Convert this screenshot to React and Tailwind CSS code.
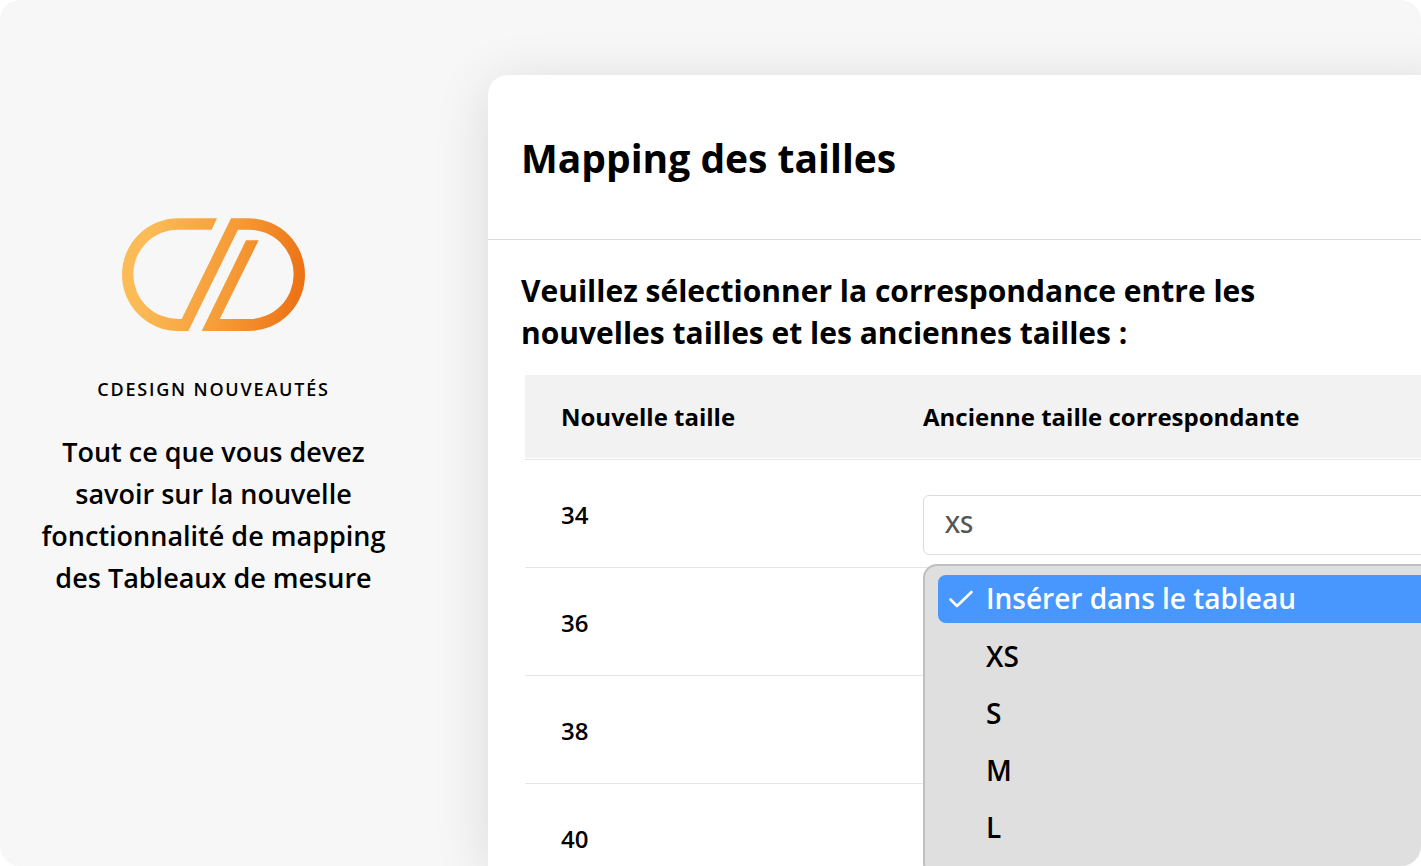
import React, { useState } from 'react';

const newSizes = ['34', '36', '38', '40'];
const oldSizes = ['XS', 'S', 'M', 'L'];

const Logo = () => (
  <svg viewBox="39 39 549 339" className="w-[183px] h-[113px]" role="img" aria-label="CDesign">
    <defs>
      <linearGradient id="logo-gradient" x1="0" y1="0.45" x2="1" y2="0.55">
        <stop offset="0.1" stopColor="#fbbc58" />
        <stop offset="0.6" stopColor="#f59a36" />
        <stop offset="1" stopColor="#ec7114" />
      </linearGradient>
    </defs>
    <path
      fill="url(#logo-gradient)"
      d="M324 40H208A169 169 0 0 0 208 378H238L387 74H420A134 134 0 0 1 420 342H332L449 106H411L278 378H419A169 169 0 0 0 419 40H366L218 342H207A134 134 0 0 1 207 74H308Z"
    />
  </svg>
);

const Intro = () => (
  <aside className="w-[427px] shrink-0 flex flex-col items-center pt-[218px] text-center">
    <Logo />
    <p className="mt-[46px] text-[18px] leading-6 font-semibold tracking-widest">CDESIGN NOUVEAUTÉS</p>
    <h1 className="mt-[30px] px-8 text-[27px] leading-[42px] font-semibold">
      Tout ce que vous devez
      <br />
      savoir sur la nouvelle
      <br />
      fonctionnalité de mapping
      <br />
      des Tableaux de mesure
    </h1>
  </aside>
);

const Check = () => (
  <svg viewBox="0 0 24 18" className="w-6 h-[18px]" fill="none" stroke="currentColor" strokeWidth="2.6" strokeLinecap="round" strokeLinejoin="round">
    <path d="M1.5 9.5L8 16L22.5 2" />
  </svg>
);

const SizeMenu = ({ onPick }) => (
  <div
    role="listbox"
    aria-label="Ancienne taille"
    className="absolute z-10 top-full mt-[9px] left-0 w-full flex flex-col gap-[10px] px-[13px] pt-[9px] pb-6 text-[28px] font-semibold bg-[#dfdfdf] border-2 border-[#bfbfbf] rounded-[14px]"
  >
    <button
      role="option"
      aria-selected={true}
      onClick={() => onPick('XS')}
      className="h-12 shrink-0 flex items-center gap-[13px] px-[11px] rounded-lg bg-[#4797ff] text-white text-left"
    >
      <Check />
      <span className="pb-[2px]">Insérer dans le tableau</span>
    </button>
    {oldSizes.map((size) => (
      <button
        key={size}
        role="option"
        aria-selected={false}
        onClick={() => onPick(size)}
        className="h-[47px] shrink-0 pl-12 pb-[2px] text-left"
      >
        {size}
      </button>
    ))}
  </div>
);

const MappingTable = () => {
  const [value, setValue] = useState('XS');
  return (
    <table className="w-full table-fixed border-separate border-spacing-0 text-[24px] text-left">
      <thead>
        <tr>
          <th className="w-[398px] p-0 border-b border-[#e5e5e5] font-bold">
            <div className="h-[83px] mb-px pl-9 flex items-center bg-[#f2f2f2]">Nouvelle taille</div>
          </th>
          <th className="p-0 border-b border-[#e5e5e5] font-bold">
            <div className="h-[83px] mb-px flex items-center bg-[#f2f2f2]">Ancienne taille correspondante</div>
          </th>
        </tr>
      </thead>
      <tbody>
        {newSizes.map((size, i) => (
          <tr key={size} className="h-[108px]">
            <td className="p-0 pt-[2px] pl-9 border-b border-[#e5e5e5] font-semibold">{size}</td>
            <td className="p-0 border-b border-[#e5e5e5] align-top">
              {i === 0 && (
                <div className="relative mt-[35px]">
                  <select
                    aria-label={`Ancienne taille pour ${size}`}
                    value={value}
                    onChange={(e) => setValue(e.target.value)}
                    className="block w-full h-[60px] pl-[21px] pb-[2px] appearance-none bg-white border border-[#dcdcdc] rounded-md font-semibold text-[#555]"
                  >
                    {oldSizes.map((s) => (
                      <option key={s}>{s}</option>
                    ))}
                  </select>
                  <SizeMenu onPick={setValue} />
                </div>
              )}
            </td>
          </tr>
        ))}
      </tbody>
    </table>
  );
};

const App = () => (
  <div className="h-screen bg-white">
    <div className="h-full flex overflow-hidden rounded-[20px] bg-[#f7f7f7] text-black font-['Open_Sans',sans-serif]">
      <Intro />
      {/* The card runs off the right and bottom edges */}
      <main className="flex-1 min-w-0 mt-[75px] ml-[61px] -mr-10 bg-white rounded-tl-[20px] shadow-[0_8px_56px_rgba(0,0,0,0.12)]">
        <header className="h-[165px] flex items-center pt-[2px] pl-[33px] border-b border-[#dcdcdc]">
          <h2 className="text-[39px] font-bold">Mapping des tailles</h2>
        </header>
        <p className="max-w-[800px] pt-[30px] pl-[33px] text-[30px] leading-[42px] font-bold">
          Veuillez sélectionner la correspondance entre les nouvelles tailles et les anciennes tailles :
        </p>
        <div className="mt-[21px] ml-[37px]">
          <MappingTable />
        </div>
      </main>
    </div>
  </div>
);

export default App;
